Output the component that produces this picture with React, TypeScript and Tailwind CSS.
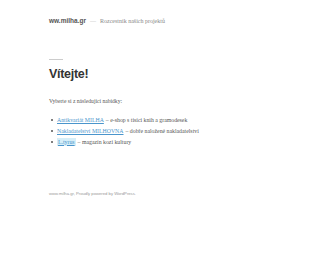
import React from "react";

const serif = { fontFamily: '"Liberation Serif", "Times New Roman", serif' };
const sans = { fontFamily: '"Liberation Sans", Arial, sans-serif' };

export default function App() {
  const items = [
    { link: "Antikvariát MILHA", text: "e-shop s tisíci knih a gramodesek", hl: false },
    { link: "Nakladatelství MILHOVNA", text: "dobře naložené nakladatelství", hl: false },
    { link: "L.tyrus", text: "magazín kozí kultury", hl: true },
  ];
  return (
    <div className="w-[336px] h-[280px] bg-white overflow-hidden pl-[49px]">
      <div className="pt-[18px] flex items-baseline gap-[4px] leading-none">
        <span className="text-[6.5px] font-bold text-[#555]" style={sans}>ww.milha.gr</span>
        <span className="text-[6px] text-[#bbb]" style={serif}>—</span>
        <span className="text-[6px] text-[#888]" style={serif}>Rozcestník našich projektů</span>
      </div>
      <div className="mt-[34px] w-[14px] h-px bg-[#ccc]" />
      <h1 className="mt-[8px] text-[12.5px] font-bold leading-[13px] tracking-[-0.3px] text-[#333]" style={sans}>Vítejte!</h1>
      <p className="mt-[16px] text-[5.6px] leading-[8px] text-[#555]" style={serif}>Vyberte si z následující nabídky:</p>
      <ul className="mt-[11px] flex flex-col gap-[3px]">
        {items.map((it) => (
          <li key={it.link} className="flex items-center text-[5.8px] leading-[8px] text-[#555]" style={serif}>
            <span className="w-[2px] h-[2px] rounded-full bg-[#555] ml-[2px] mr-[4px]" />
            <span className={it.hl ? "text-[#4a95cc] underline bg-[#d6eef8] px-[1px]" : "text-[#4a95cc] underline"}>{it.link}</span>
            <span className="ml-[2px]">– {it.text}</span>
          </li>
        ))}
      </ul>
      <div className="mt-[45px] text-[4.2px] leading-[6px] text-[#999]" style={sans}>
        www.milha.gr, Proudly powered by WordPress.
      </div>
    </div>
  );
}
